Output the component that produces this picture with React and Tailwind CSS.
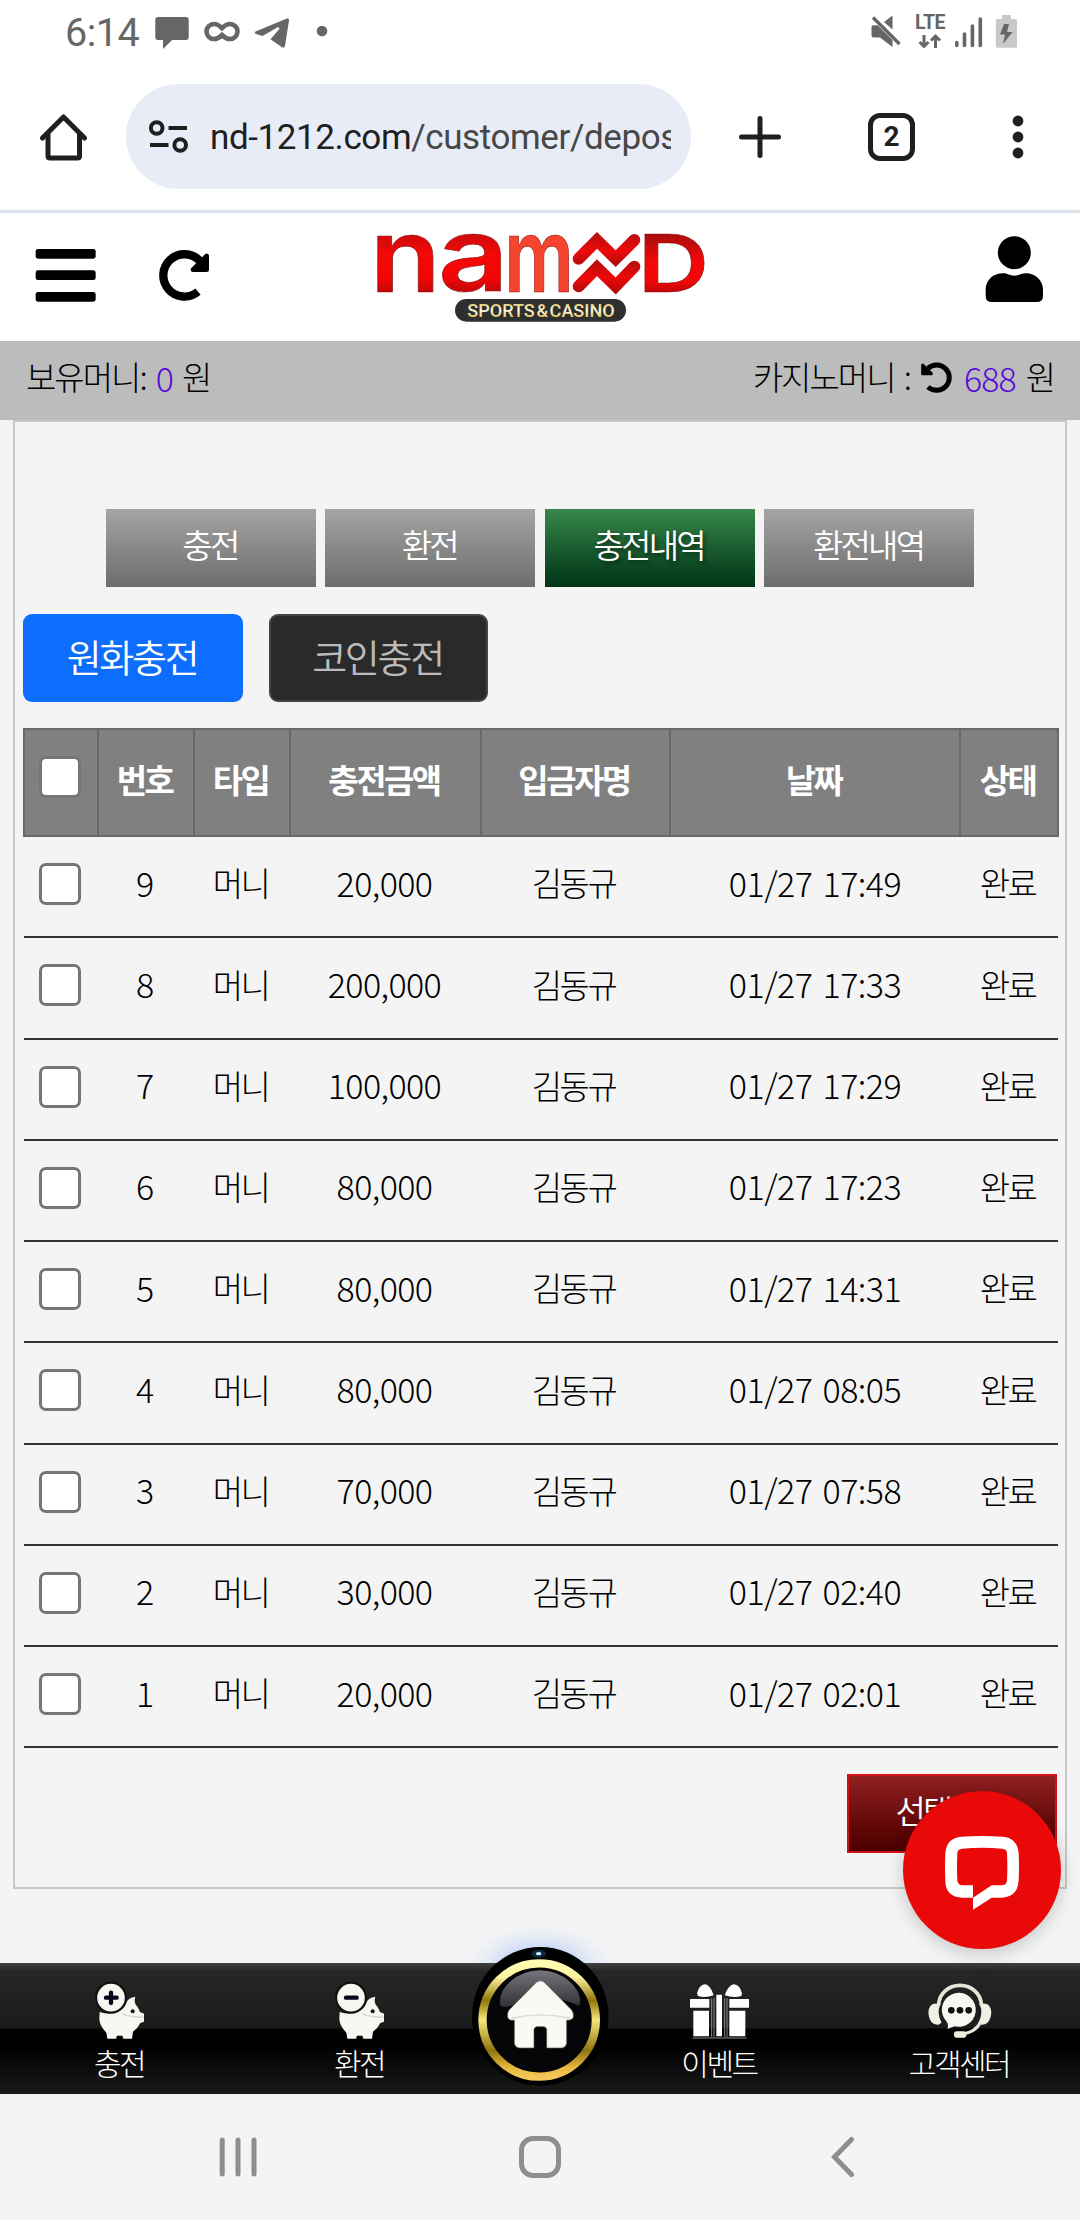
const deposits = [
    { no: 9, amount: "20,000", date: "01/27 17:49" },
    { no: 8, amount: "200,000", date: "01/27 17:33" },
    { no: 7, amount: "100,000", date: "01/27 17:29" },
    { no: 6, amount: "80,000", date: "01/27 17:23" },
    { no: 5, amount: "80,000", date: "01/27 14:31" },
    { no: 4, amount: "80,000", date: "01/27 08:05" },
    { no: 3, amount: "70,000", date: "01/27 07:58" },
    { no: 2, amount: "30,000", date: "01/27 02:40" },
    { no: 1, amount: "20,000", date: "01/27 02:01" },
];

const headers = ["번호", "타입", "충전금액", "입금자명", "날짜", "상태"];

const tabs = [
    { label: "충전" },
    { label: "환전" },
    { label: "충전내역", active: true },
    { label: "환전내역" },
];

const StatusBar = () => (
    <div className="flex h-[66px] items-start justify-between pl-[65px] pr-[63px] text-[#666]">
        <div className="flex">
            <span className="mt-[13px] w-[90px] font-['Roboto'] text-[39.5px] leading-[40px] font-normal tracking-[-0.5px]">
                6:14
            </span>
            <svg width="180" height="66" viewBox="155 0 180 66" fill="currentColor">
                <path d="M158 17h28q2.7 0 2.7 2.7v17.6q0 2.7-2.7 2.7h-14l-9 9v-9h-5q-2.7 0-2.7-2.7V19.700q0-2.7 2.700-2.700z" />
                <path
                    d="M222 28c-3-3-5-4-8-4a7.500 7.500 0 0 0 0 15c3 0 5-1 8-4c3 3 5 4 8 4a7.500 7.500 0 0 0 0-15c-3 0-5 1-8 4z"
                    fill="none"
                    stroke="currentColor"
                    strokeWidth="4.600"
                />
                <path d="M255.500 31.500L287 18.500q2.400-.6 2 2L285 46q-.7 2.600-3 1.300l-11.500-8 9-10.500q0-2-2-1.500L262.500 36l-6.500-2q-2-1-.5-2.500z" />
                <circle cx="322" cy="31" r="5.300" />
            </svg>
        </div>
        <div className="flex">
            <svg width="32" height="66" viewBox="868 0 32 66" fill="currentColor">
                <path d="M868.500 27q0-1.700 1.700-1.700h4.500L889.500 40v7L877 37.500h-6.500q-2 0-2-2z" />
                <path d="M881 22l8.500-6.500V29.500z" />
                <path d="M870 17.500L896.500 44" stroke="currentColor" strokeWidth="3.400" />
            </svg>
            <div className="ml-[12px] flex flex-col items-center">
                <span className="mt-[13px] font-['Roboto'] text-[19.500px] leading-[20px] font-bold tracking-[-0.500px]">
                    LTE
                </span>
                <svg width="24" height="16" viewBox="0 0 24 16" fill="none" stroke="currentColor" strokeWidth="3">
                    <path d="M6 2v12M1.500 9L6 13.500 10.500 9M17.500 15V3M13 7.500L17.500 3 22 7.500" />
                </svg>
            </div>
            <svg className="ml-[10px]" width="62" height="66" viewBox="954 0 62 66">
                <g stroke="currentColor" strokeWidth="3.600" strokeLinecap="round">
                    <path d="M955.800 42.500V45.500M963.500 34V45.500M971.400 26V45.500M979.300 19V45.500" />
                </g>
                <path d="M1001 15h9v4h4.500q1.700 0 1.700 1.700v25.300q0 1.700-1.700 1.700h-18q-1.700 0-1.700-1.700V20.700q0-1.700 1.700-1.700h4.500z" fill="#c9c9c9" />
                <path d="M1003 24h5l-2 8h5.500L1002 44l2-9.500h-5z" fill="currentColor" />
            </svg>
        </div>
    </div>
);

const BrowserBar = () => (
    <div className="flex h-[144px] items-center pb-[3px] pl-[39px] text-[#1f1f1f]">
        <svg width="48" height="50" viewBox="39 111.500 48 50" fill="none" stroke="currentColor" strokeWidth="5">
            <path d="M42.500 137.500L63.500 116.500L84.500 137.500" strokeLinecap="round" strokeLinejoin="round" />
            <path d="M48 133V155.500Q48 157.500 50 157.500H77.500Q79.500 157.500 79.500 155.500V133" />
        </svg>
        <div className="ml-[39px] flex h-[105px] w-[565px] items-center rounded-full bg-[#e8ecf6] pl-[22px] pr-[20px]">
            <svg width="42" height="36" viewBox="148 119 42 36" fill="none" stroke="currentColor" strokeWidth="4">
                <circle cx="156.700" cy="128" r="5.800" />
                <path d="M168.500 128H187M150 145H168.500" />
                <circle cx="180.200" cy="145" r="5.800" />
            </svg>
            <div className="ml-[20px] flex-1 overflow-hidden pt-[2px] font-['Roboto'] text-[35px] leading-[48px] font-normal tracking-[-0.400px] whitespace-nowrap">
                nd-1212.com<span className="text-[#474747]">/customer/deposit</span>
            </div>
        </div>
        <svg className="ml-[46px]" width="46" height="46" viewBox="0 0 46 46" stroke="currentColor" strokeWidth="5" strokeLinecap="round">
            <path d="M23 4.500V41.500M4.500 23H41.500" />
        </svg>
        <div className="ml-[85px] flex h-[48px] w-[47px] items-center justify-center rounded-[12px] border-[5px] border-current font-['Roboto'] text-[28px] leading-none font-bold">
            2
        </div>
        <svg className="ml-[97px]" width="12" height="46" viewBox="0 0 12 46" fill="currentColor">
            <circle cx="6" cy="7" r="5.400" />
            <circle cx="6" cy="23" r="5.400" />
            <circle cx="6" cy="39" r="5.400" />
        </svg>
    </div>
);

const Logo = () => (
    <svg className="overflow-visible" width="360" height="120" viewBox="0 0 1080 360">
        <defs>
            <linearGradient id="red" x1="0" y1="0" x2="0" y2="1">
                <stop offset="0.2" stopColor="#a80d0d" />
                <stop offset="0.5" stopColor="#f40808" />
                <stop offset="0.7" stopColor="#f40505" />
                <stop offset="0.85" stopColor="#a80a0a" />
            </linearGradient>
            <linearGradient id="gold" x1="0" y1="0" x2="0" y2="1">
                <stop offset="0.2" stopColor="#e5ce72" />
                <stop offset="0.5" stopColor="#fffbe0" />
                <stop offset="0.8" stopColor="#e0c55e" />
            </linearGradient>
            <linearGradient id="wave" gradientUnits="userSpaceOnUse" x1="0" y1="55" x2="0" y2="232">
                <stop offset="0" stopColor="#b50d0d" />
                <stop offset="0.3" stopColor="#ee0a0a" />
                <stop offset="0.5" stopColor="#b80c0c" />
                <stop offset="0.75" stopColor="#ee0808" />
                <stop offset="1" stopColor="#b00a0a" />
            </linearGradient>
        </defs>
        <g fontFamily="Inter" fontWeight="600" fontSize="310" stroke="#8e1a1a" strokeWidth="2">
            <text x="30" y="230" textLength="212" lengthAdjust="spacingAndGlyphs" fill="url(#red)">n</text>
            <text x="234" y="228" textLength="212" lengthAdjust="spacingAndGlyphs" fill="url(#red)">a</text>
            <text x="433" y="230" textLength="209" lengthAdjust="spacingAndGlyphs" fill="#f5452f">m</text>
            <text x="833" y="230" fontSize="240" textLength="214" lengthAdjust="spacingAndGlyphs" fill="url(#red)">D</text>
        </g>
        <g fill="none" stroke="url(#wave)" strokeWidth="36" strokeLinecap="round">
            <path d="M656 131L711 76L767 131L823 75" />
            <path d="M656 214L711 158L767 213L823 155" />
        </g>
        <rect x="285" y="252" width="513" height="68" rx="34" fill="#2e302f" />
        <text
            x="322"
            y="306"
            fontFamily="Roboto"
            fontWeight="500"
            fontSize="57"
            wordSpacing="-9"
            textLength="442"
            lengthAdjust="spacingAndGlyphs"
            fill="url(#gold)"
        >
            SPORTS &amp; CASINO
        </text>
    </svg>
);

const SiteHeader = () => (
    <header className="flex h-[131px] justify-between border-t-[3px] border-[#dce3eb] bg-white">
        <div className="flex w-[360px]">
            <svg width="110" height="128" viewBox="0 24 330 384">
                <rect x="107" y="132" width="180" height="29" rx="7" />
                <rect x="107" y="196" width="180" height="29" rx="7" />
                <rect x="107" y="261" width="180" height="29" rx="7" />
            </svg>
            <svg width="110" height="128" viewBox="330 24 330 384">
                <path d="M600 168A63.500 63.500 0 1 0 594 260" fill="none" stroke="#000" strokeWidth="25" />
                <path d="M579 194L620 153V194Z" stroke="#000" strokeWidth="14" strokeLinejoin="round" />
            </svg>
        </div>
        <div className="pt-[2px]">
            <Logo />
        </div>
        <div className="flex w-[360px] justify-end">
            <svg width="120" height="128" viewBox="720 24 360 384">
                <circle cx="883" cy="143" r="49.500" />
                <path d="M797 254C797 225 820 205 849 205C863 205 868 212 883 212S903 205 917 205C947 205 969 227 969 254V272Q969 291 950 291H816Q797 291 797 272Z" />
            </svg>
        </div>
    </header>
);

const MoneyBar = () => (
    <div className="flex h-[79px] items-center justify-between bg-[#bcbcbc] pr-[26px] pb-[7px] pl-[26px] text-[33px] font-light tracking-[-2px]">
        <div className="flex items-center">
            <span>보유머니:</span>
            <span className="mr-[10px] ml-[10px] text-[34px] text-[#5a0cd8]">0</span>
            <span>원</span>
        </div>
        <div className="flex items-center">
            <span className="[word-spacing:4px]">카지노머니 :</span>
            <svg className="ml-[10px] mr-[11px]" width="33" height="32" viewBox="600 464 99 96">
                <path d="M624 486A38 38 0 1 1 624 542" fill="none" stroke="#000" strokeWidth="15" />
                <path d="M608 476V502H634Z" stroke="#000" strokeWidth="9" strokeLinejoin="round" />
            </svg>
            <span className="mr-[10px] text-[34px] tracking-[-1px] text-[#5a0cd8]">688</span>
            <span>원</span>
        </div>
    </div>
);

const Checkbox = () => (
    <span className="block h-[42px] w-[42px] rounded-[7px] border-[3px] border-[#767676] bg-white" />
);

const DepositTable = () => (
    <table className="w-[1034px] table-fixed border-collapse text-center text-[33px] font-light">
        <colgroup>
            <col className="w-[74px]" />
            <col className="w-[96px]" />
            <col className="w-[96px]" />
            <col className="w-[191px]" />
            <col className="w-[189px]" />
            <col className="w-[290px]" />
            <col className="w-[98px]" />
        </colgroup>
        <thead>
            <tr className="h-[107px] bg-[#808080] text-white">
                <th className="border-2 border-[#686868] p-0">
                    <div className="-mt-[11px] flex justify-center pr-[2px]">
                        <Checkbox />
                    </div>
                </th>
                {headers.map((h) => (
                    <th key={h} className="border-2 border-[#686868] p-0 pr-[3px] pb-[6px] font-bold tracking-[-2.500px]">
                        {h}
                    </th>
                ))}
            </tr>
        </thead>
        <tbody>
            {deposits.map(({ no, amount, date }) => (
                <tr key={no} className="h-[101.250px] border-b-2 border-[#333]">
                    <td className="p-0">
                        <div className="-mt-[5px] flex justify-center pr-[2px]">
                            <Checkbox />
                        </div>
                    </td>
                    <td className="p-0 pr-[2px] pb-[9px] text-[34px]">{no}</td>
                    <td className="p-0 pr-[3px] pb-[7px] tracking-[-2.500px]">머니</td>
                    <td className="p-0 pr-[2px] pb-[9px] text-[34px] tracking-[-0.600px]">{amount}</td>
                    <td className="p-0 pr-[4px] pb-[7px] tracking-[-2.500px]">김동규</td>
                    <td className="p-0 pb-[9px] text-[34px] tracking-[-0.500px] [word-spacing:3px]">{date}</td>
                    <td className="p-0 pr-[3px] pb-[7px] tracking-[-2.500px]">완료</td>
                </tr>
            ))}
        </tbody>
    </table>
);

const ChatButton = () => (
    <div className="absolute top-[1791px] left-[903px] h-[158px] w-[158px] rounded-full bg-[#e90909] shadow-[0_4px_18px_rgba(0,0,0,0.2)]">
        <svg width="158" height="158" viewBox="369 272 474 474">
            <path
                fill="#fff"
                fillRule="evenodd"
                d="M579 628V592H547Q497 590 496 541Q494 500 496 458Q500 412 545 409Q606 405 668 409Q712 412 716 458Q718 500 716 541Q713 590 666 592H635ZM579 555V592L635 555H665Q680 553 681 541Q683 500 681 458Q680 446 666 445Q606 440 546 445Q533 446 532 458Q530 500 532 541Q534 553 547 555Z"
            />
        </svg>
    </div>
);

const PiggyIcon = ({ plus }) => (
    <svg width="60" height="62" viewBox="270 150 180 186">
        <path
            d="M299 246Q350 262 376 222Q384 203 406 200Q402 212 406 222Q416 234 420 246L432 251V275L421 279Q414 294 399 305L396 326H370L367 317H351L348 326H322L319 308Q300 290 298 268Z"
            fill="#f6f7f0"
        />
        <circle cx="398" cy="244" r="6" fill="#111" />
        <path d="M366 252Q395 262 431 262" fill="none" stroke="#d9dad3" strokeWidth="5" />
        <circle cx="333" cy="203" r="45" fill="#f7f7f2" stroke="#111" strokeWidth="7" />
        <path
            d={plus ? "M318 203H350M333 188V219" : "M318 203H350"}
            stroke="#06061a"
            strokeWidth="13"
            strokeLinecap="round"
        />
    </svg>
);

const GiftIcon = () => (
    <svg width="66" height="62" viewBox="141 150 198 186" fill="#fff">
        <path d="M171 190Q178 163 197 163Q212 168 221 196Q195 205 174 198ZM306 190Q299 163 280 163Q264 168 254 196Q282 205 304 198Z" />
        <path d="M150 207H208V233H150ZM268 207H327V233H268ZM160 242H207V319H160ZM268 242H316V319H268ZM229 194H246V319H229Z" />
        <path d="M215 205V321M222 205V321M254 205V321M261 205V321M158 324H320" stroke="#8a8a8a" strokeWidth="3" />
    </svg>
);

const SupportIcon = () => (
    <svg width="70" height="62" viewBox="854 150 210 186" fill="#eef0e4">
        <path d="M895 226A64 60 0 0 1 1023 226" fill="none" stroke="#e5e8d8" strokeWidth="11" />
        <path d="M900 222Q864 214 864 250Q868 286 894 284L904 278Q888 250 900 222ZM1018 222Q1053 214 1053 250Q1049 286 1023 284L1014 278Q1030 250 1018 222Z" />
        <path d="M1021 276Q1006 306 968 312" fill="none" stroke="#e5e8d8" strokeWidth="9" />
        <rect x="941" y="304" width="37" height="19" rx="8" />
        <path d="M921 297Q926 286 919 275A51 51 0 1 1 944 289Q932 292 921 297Z" fill="#f7f8f1" />
        <circle cx="933" cy="241" r="10" fill="#111" />
        <circle cx="959" cy="241" r="10" fill="#111" />
        <circle cx="985" cy="241" r="10" fill="#111" />
    </svg>
);

const HomeButton = () => (
    <svg className="absolute -top-[53px] left-[440px]" width="200" height="184" viewBox="0 -60 600 552">
        <defs>
            <radialGradient id="glow">
                <stop offset="0.4" stopColor="#9dbdf5" stopOpacity="0.6" />
                <stop offset="0.7" stopColor="#b4ccf8" stopOpacity="0.25" />
                <stop offset="1" stopColor="#c8dafa" stopOpacity="0" />
            </radialGradient>
            <linearGradient id="ring" x1="0" y1="0" x2="0" y2="1">
                <stop offset="0" stopColor="#fffbb0" />
                <stop offset="0.12" stopColor="#fbf3a0" />
                <stop offset="0.33" stopColor="#917606" />
                <stop offset="0.5" stopColor="#f6e877" />
                <stop offset="0.77" stopColor="#8f7410" />
                <stop offset="0.92" stopColor="#e6b93e" />
                <stop offset="1" stopColor="#f3c858" />
            </linearGradient>
            <linearGradient id="gloss" x1="0" y1="0" x2="0" y2="1">
                <stop offset="0" stopColor="#77757c" />
                <stop offset="1" stopColor="#323137" />
            </linearGradient>
            <clipPath id="above">
                <rect x="0" y="-60" width="600" height="159" />
            </clipPath>
        </defs>
        <ellipse cx="300" cy="120" rx="235" ry="140" fill="url(#glow)" clipPath="url(#above)" />
        <ellipse cx="301" cy="259" rx="205" ry="208" />
        <ellipse cx="296" cy="71" rx="22" ry="12" fill="#0a2a42" />
        <ellipse cx="296" cy="71" rx="8" ry="5" fill="#d8f2ff" />
        <circle cx="297.500" cy="270" r="170" fill="#050507" stroke="url(#ring)" strokeWidth="25" />
        <path d="M182 228Q172 190 210 155Q250 121 300 121T390 155Q428 190 418 228Q400 215 300 195Q200 240 182 228Z" fill="url(#gloss)" />
        <path
            d="M290 156Q301 148 312 156L395 240Q402 250 400 262Q396 272 380 271V340Q378 352 366 354H320V298Q318 290 311 290H291Q284 290 282 298V354H237Q225 352 223 340V271Q206 272 203 262Q200 250 207 240Z"
            fill="#f8faf4"
            stroke="#55564f"
            strokeWidth="2"
        />
        <path d="M215 265Q300 245 390 265" fill="none" stroke="#dcded8" strokeWidth="5" />
    </svg>
);

const NavItem = ({ icon, label }) => (
    <div className="flex w-[240px] flex-col items-center pt-[17px]">
        {icon}
        <span className="mt-[1px] pr-[2px] text-[30px] leading-[38px] font-light tracking-[-2.500px] text-white">{label}</span>
    </div>
);

const BottomNav = () => (
    <nav className="relative flex h-[131px] justify-between bg-[linear-gradient(to_bottom,#404040_0,#262626_8px,#1b1b1b_65px,#000_66px,#000_80px,#191919_131px)]">
        <NavItem icon={<PiggyIcon plus />} label="충전" />
        <NavItem icon={<PiggyIcon />} label="환전" />
        <HomeButton />
        <div className="w-[120px]" />
        <NavItem icon={<GiftIcon />} label="이벤트" />
        <NavItem icon={<SupportIcon />} label="고객센터" />
    </nav>
);

const SystemNav = () => (
    <div className="flex h-[126px] items-center bg-[#f4f4f4] pl-[219px] text-[#8e8e8e]">
        <svg width="39" height="42" viewBox="0 0 39 42" stroke="currentColor" strokeWidth="5" strokeLinecap="round">
            <path d="M3.200 4V38M19 4V38M35 4V38" />
        </svg>
        <div className="ml-[261px] h-[42px] w-[42px] rounded-[14px] border-[5px] border-current" />
        <svg className="ml-[269px]" width="26" height="42" viewBox="0 0 26 42" fill="none" stroke="currentColor" strokeWidth="5">
            <path d="M21.500 3.500L4.500 21L21.500 38.500" strokeLinecap="round" />
        </svg>
    </div>
);

const App = () => {
    return (
        <div className="relative h-[2220px] w-[1080px] overflow-hidden bg-white font-['Noto_Sans_CJK_KR',sans-serif] font-[350] text-black">
            <StatusBar />
            <BrowserBar />
            <SiteHeader />
            <MoneyBar />
            <main className="h-[1543px] bg-[#f4f4f4]">
                <div className="mx-[13px] flex h-[1469px] flex-col border-2 border-[#c8c8c8] px-[8px]">
                    <div className="mt-[87px] flex justify-center gap-[9.400px]">
                        {tabs.map(({ label, active }) => (
                            <div
                                key={label}
                                className={`flex h-[78px] w-[210px] items-center justify-center pr-[2px] pb-[6px] text-[33px] tracking-[-2.800px] text-white ${
                                    active
                                        ? "bg-linear-to-b from-[#37884b] to-[#003517] [text-shadow:2px_3px_4px_rgba(0,0,0,0.5)]"
                                        : "bg-linear-to-b from-[#a5a5a5] to-[#6d6d6d]"
                                }`}
                            >
                                {label}
                            </div>
                        ))}
                    </div>
                    <div className="mt-[27px] flex gap-[26px] text-[38px] tracking-[-2.300px]">
                        <div className="flex h-[88px] w-[220px] items-center justify-center rounded-[9px] bg-[#0d6efd] pr-[2px] pb-[6px] text-white">
                            원화충전
                        </div>
                        <div className="flex h-[88px] w-[219px] items-center justify-center rounded-[9px] border-2 border-[#444] bg-[#2a2a2a] pr-[2px] pb-[6px] text-[#bbb]">
                            코인충전
                        </div>
                    </div>
                    <div className="mt-[26px]">
                        <DepositTable />
                    </div>
                    <div className="mt-[26px] flex h-[79px] w-[210px] items-center justify-center self-end border-2 border-[#d01216] bg-linear-to-b from-[#922020] to-[#4b0000] pr-[3px] pb-[6px] text-[33px] tracking-[-2.800px] text-white">
                        선택삭제
                    </div>
                </div>
            </main>
            <BottomNav />
            <SystemNav />
            <ChatButton />
        </div>
    );
};

export default App;
